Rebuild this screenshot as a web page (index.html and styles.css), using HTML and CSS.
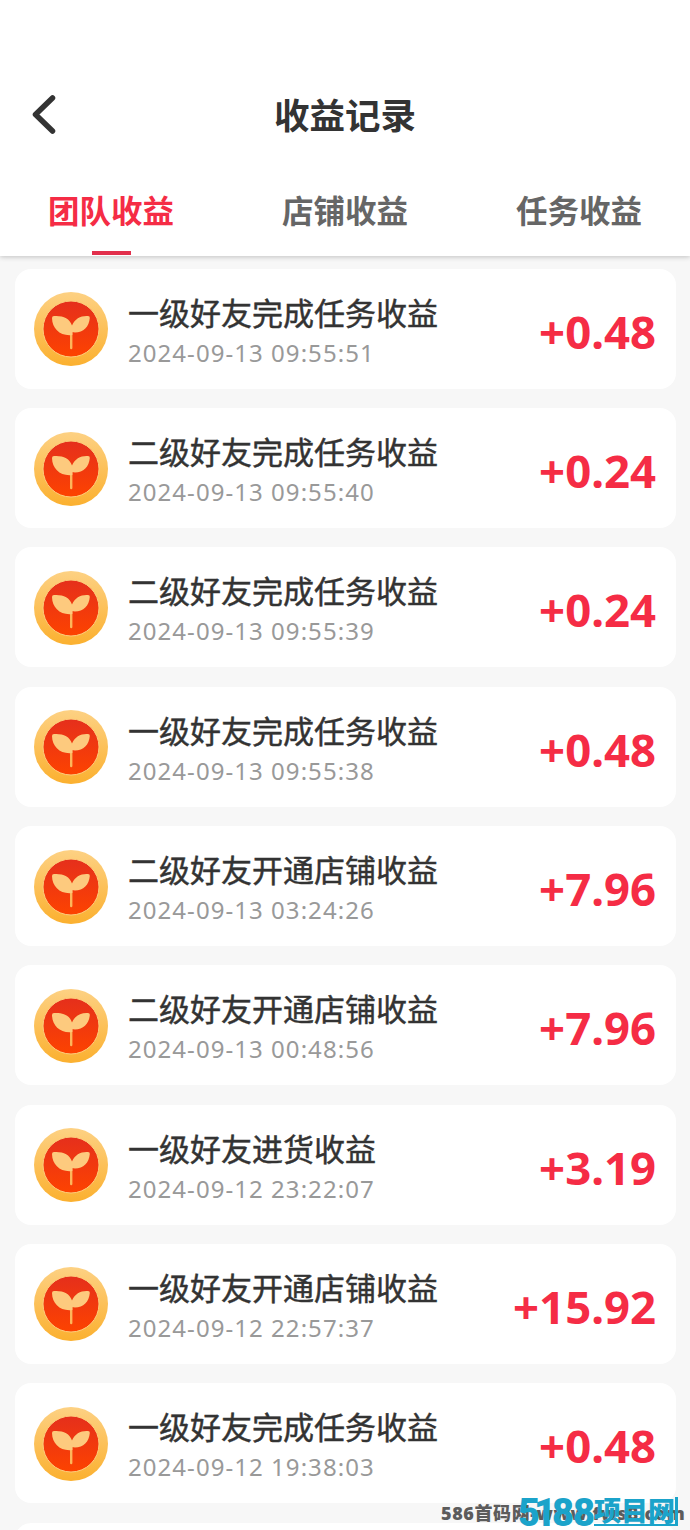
FILE: index.html
```
<!doctype html>
<html lang="zh-CN">
    <head>
        <meta charset="utf-8">
        <title>收益记录</title>
        <link rel="stylesheet" href="styles.css">
        <script src="records.js" defer></script>
    </head>
    <body>
        <header class="header">
            <div class="nav">
                <svg class="back" viewBox="0 0 26 42"><path d="M21.500 5 4.500 21.500l17 16.500"/></svg>
                <h1 class="title">收益记录</h1>
            </div>
            <div class="tabs">
                <div class="tab active">团队收益</div>
                <div class="tab">店铺收益</div>
                <div class="tab">任务收益</div>
            </div>
        </header>

        <svg class="defs" width="0" height="0">
            <defs>
                <linearGradient id="gold" x1="0" y1="0" x2="0" y2="1">
                    <stop offset="0" stop-color="#fdd183"/>
                    <stop offset="1" stop-color="#fbb02f"/>
                </linearGradient>
                <linearGradient id="red" x1="0" y1="0" x2="0" y2="1">
                    <stop offset="0" stop-color="#e52f1c"/>
                    <stop offset="1" stop-color="#fd4300"/>
                </linearGradient>
                <symbol id="coin" viewBox="0 0 74 74">
                    <circle cx="37" cy="37" r="37" fill="url(#gold)"/>
                    <circle cx="37" cy="37" r="28" fill="url(#red)" stroke="#fdcb7c" stroke-width="1"/>
                    <path d="M37.200 41V56" stroke="#fdb65a" stroke-width="2.400" stroke-linecap="round"/>
                    <path d="M18 26q0-2 2-2c9-.5 15.500 2 18 9.500C41 26.500 47 23.500 54 24q2 0 1.800 2C55 35.500 48.500 41.500 38.400 40.300V43C26.500 44.500 18.200 37 18 26z" fill="#fdca7e"/>
                </symbol>
            </defs>
        </svg>

        <main class="list"></main>

        <div class="watermark">586首码网-www.fws8.com</div>
        <div class="brand"><span class="brand-num">5<i>1</i>88</span><span class="brand-name">项目网</span></div>
    </body>
</html>
```
FILE: styles.css
```
* {
    box-sizing:border-box;
}

html {
    overflow:hidden;
}

body {
    margin:0;
    height:1530px;
    position:relative;
    overflow:hidden;
    background-color:#f7f7f7;
    color:#333333;
    font-family:"Noto Sans", "Noto Sans CJK SC", sans-serif;
}

.header {
    height:256px;
    padding-top:71px;
    background-color:#ffffff;
    box-shadow:0 1px 5px rgba(0,0,0,0.22);
}

.nav {
    display:grid;
    grid-template-columns:60px 1fr 60px;
    align-items:center;
    height:86px;
}

.back {
    width:26px;
    height:42px;
    margin-left:31px;
    fill:none;
    stroke:#333333;
    stroke-width:5.5;
    stroke-linecap:round;
    stroke-linejoin:round;
}

.title {
    margin:0;
    text-align:center;
    font-family:"Noto Sans CJK SC", sans-serif;
    font-size:35.5px;
    line-height:52px;
    font-weight:bold;
}

.tabs {
    display:flex;
    justify-content:space-between;
    height:99px;
    padding:28px 48px 0;
}

.tab {
    font-family:"Noto Sans CJK SC", sans-serif;
    font-size:31.5px;
    line-height:48px;
    font-weight:bold;
    color:#666666;
}

.active {
    color:#f52c45;
}

.active::after {
    content:"";
    display:block;
    width:39px;
    height:4px;
    margin:18px auto 0;
    background-color:#e22f4c;
}

.defs {
    display:block;
}

.list {
    display:flex;
    flex-direction:column;
    gap:19.33px;
    height:1274px;
    padding:12.7px 14.5px 0;
    overflow:hidden;
}

.card {
    display:flex;
    align-items:center;
    flex:none;
    height:120px;
    padding:0 19.5px;
    border-radius:16px;
    background-color:#ffffff;
}

.coin {
    width:74px;
    height:74px;
    margin-top:1px;
    margin-right:20px;
}

.info {
    flex:1;
    padding-top:4px;
}

.name {
    font-family:"Noto Sans CJK SC", sans-serif;
    font-size:31px;
    line-height:42px;
    font-weight:400;
    -webkit-text-stroke:0.45px #333333;
    white-space:nowrap;
}

.date {
    margin-top:2px;
    font-size:24px;
    line-height:36px;
    letter-spacing:1.05px;
    color:#999999;
    white-space:nowrap;
}

.amount {
    font-size:45.5px;
    font-weight:bold;
    color:#f52c45;
    padding-top:4px;
}

.watermark {
    position:absolute;
    left:441px;
    top:1500px;
    font-size:18px;
    line-height:26px;
    font-weight:900;
    letter-spacing:0.6px;
    color:#5c5c5c;
    white-space:nowrap;
}

.brand {
    position:absolute;
    left:518px;
    top:1497px;
    display:flex;
    align-items:flex-start;
    color:#1ba3ca;
    font-weight:bold;
    white-space:nowrap;
}

.brand-num {
    width:76px;
    font-family:Roboto, sans-serif;
    font-size:38px;
    line-height:32px;
    font-weight:900;
    letter-spacing:-1px;
}

.brand-num i {
    margin:0 -3px 0 -5px;
    font-style:normal;
}

.brand-name {
    width:84px;
    height:29px;
    border:solid #1ba3ca;
    border-width:0 3px 2px 0;
    font-family:"Noto Sans CJK SC", sans-serif;
    font-size:27px;
    line-height:25px;
    font-weight:900;
}
```
FILE: records.js
```
var records = [
    ["一级好友完成任务收益", "2024-09-13 09:55:51", "+0.48"],
    ["二级好友完成任务收益", "2024-09-13 09:55:40", "+0.24"],
    ["二级好友完成任务收益", "2024-09-13 09:55:39", "+0.24"],
    ["一级好友完成任务收益", "2024-09-13 09:55:38", "+0.48"],
    ["二级好友开通店铺收益", "2024-09-13 03:24:26", "+7.96"],
    ["二级好友开通店铺收益", "2024-09-13 00:48:56", "+7.96"],
    ["一级好友进货收益", "2024-09-12 23:22:07", "+3.19"],
    ["一级好友开通店铺收益", "2024-09-12 22:57:37", "+15.92"],
    ["一级好友完成任务收益", "2024-09-12 19:38:03", "+0.48"]
];

var html = "";
records.forEach(function(r) {
    html += '<div class="card">' +
        '<svg class="coin"><use href="#coin"/></svg>' +
        '<div class="info"><div class="name">' + r[0] + '</div><div class="date">' + r[1] + '</div></div>' +
        '<div class="amount">' + r[2] + '</div></div>';
});
// next card starts below the fold
html += '<div class="card"></div>';
document.querySelector(".list").innerHTML = html;
```
